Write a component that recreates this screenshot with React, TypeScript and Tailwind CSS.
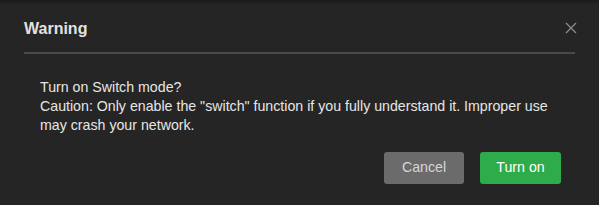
export default function App() {
  return (
    <div
      className="w-[599px] h-[205px] bg-[#252525] flex flex-col overflow-hidden"
      style={{ fontFamily: '"Liberation Sans", Arial, sans-serif' }}
    >
      <div className="h-[4px] bg-gradient-to-b from-[#1b1b1b] to-[#232323]" />
      <div className="mx-[24px] h-[50px] flex items-center justify-between border-b-2 border-[#4a4a4a]">
        <span className="text-[16px] font-bold text-[#e2e2e2] pt-[1px]">Warning</span>
        <button className="text-[#8a8a8a] -mr-[2px] -mt-[1px]">
          <svg width="12" height="12" viewBox="0 0 12 12" fill="none" stroke="currentColor" strokeWidth="1.3">
            <path d="M1 1L11 11M11 1L1 11" />
          </svg>
        </button>
      </div>
      <div className="pl-[40px] pr-[40px] pt-[24px] text-[14.2px] leading-[19px] text-[#e6e6e6]">
        <p>Turn on Switch mode?</p>
        <p>
          Caution: Only enable the "switch" function if you fully understand it. Improper use may crash
          your network.
        </p>
      </div>
      <div className="flex justify-end gap-[16px] pr-[38px] pt-[17px]">
        <button className="w-[80px] h-[32px] rounded-[3px] bg-[#6b6b6b] text-[14.2px] text-[#d6d6d6]">
          Cancel
        </button>
        <button className="w-[81px] h-[32px] rounded-[3px] bg-[#2eab4b] text-[14.2px] text-white">
          Turn on
        </button>
      </div>
    </div>
  );
}
